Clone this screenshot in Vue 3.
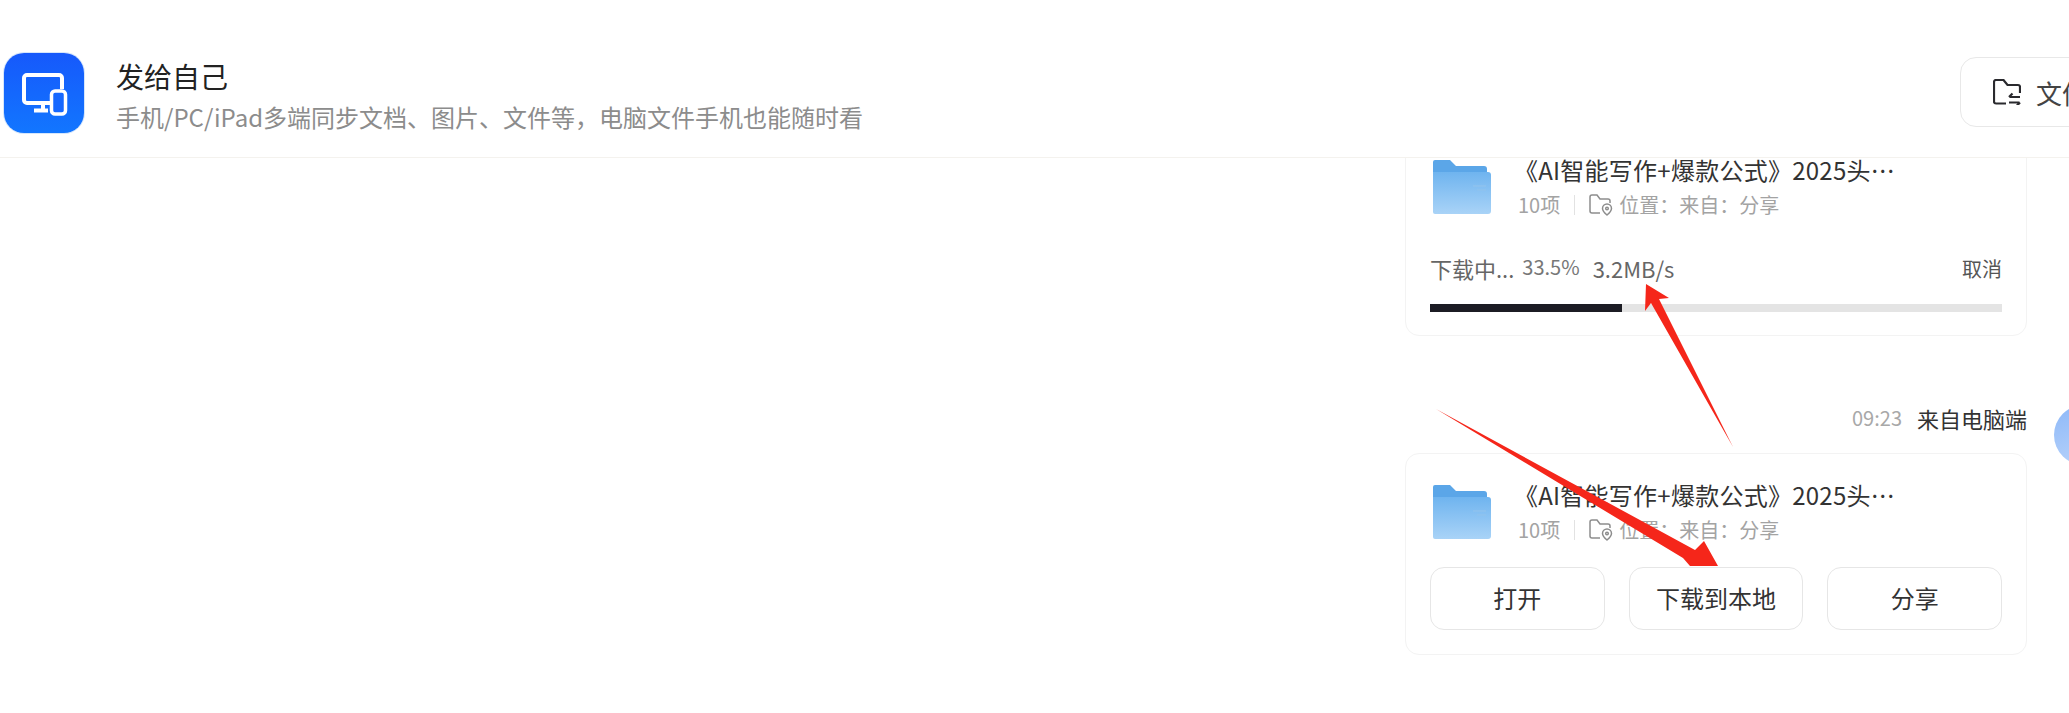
<script setup>
const progress = 33.5
const actions = ['打开', '下载到本地', '分享']
const title = '《AI智能写作+爆款公式》2025头…'
</script>

<template>
  <div class="page">
    <header class="top">
      <div class="logo">
        <svg width="80" height="80" viewBox="0 0 80 80" fill="none">
          <path d="M46 50H23a3 3 0 0 1-3-3V25a3 3 0 0 1 3-3h32a3 3 0 0 1 3 3v11" stroke="#fff" stroke-width="4" />
          <path d="M39 50v6M30 57.500h14" stroke="#fff" stroke-width="4" />
          <rect x="47.500" y="38" width="14" height="23" rx="3.500" fill="#1668ff" stroke="#fff" stroke-width="3.500" />
        </svg>
      </div>
      <div class="heading">
        <div class="heading-title">发给自己</div>
        <div class="heading-sub">手机/PC/iPad多端同步文档、图片、文件等，电脑文件手机也能随时看</div>
      </div>
      <div class="files">
        <svg width="28" height="26" viewBox="0 0 28 26" fill="none" stroke="#2a2a2e" stroke-width="2.200">
          <path d="M13 24.500H3a2 2 0 0 1-2-2V3a2 2 0 0 1 2-2h7.500l4 5H25a2 2 0 0 1 2 2v6" />
          <path d="M27 18H16.500M19.500 14.500 16 18M16 23.500h10.500M23.500 27l3.500-3.500" />
        </svg>
        <span>文件</span>
      </div>
    </header>

    <main class="thread">
      <section class="card first">
        <div class="file">
          <svg class="folder" width="58" height="54" viewBox="0 0 58 54">
            <defs>
              <linearGradient id="fb" x1="0" y1="0" x2="0" y2="1">
                <stop offset="0" stop-color="#6fb4ef" />
                <stop offset="1" stop-color="#a9d3f7" />
              </linearGradient>
            </defs>
            <path d="M0 2a2 2 0 0 1 2-2h15l6 6h28a3 3 0 0 1 3 3v6H0z" fill="#5ba6e8" />
            <path d="M0 12h55a3 3 0 0 1 3 3v36a3 3 0 0 1-3 3H2a2 2 0 0 1-2-2z" fill="url(#fb)" />
            <path d="M40 26h13M44 30h9" stroke="#8fc2ee" stroke-width="1.500" />
          </svg>
          <div class="file-text">
            <div class="file-title">{{ title }}</div>
            <div class="file-meta">
              <span>10项</span>
              <i class="divider"></i>
              <svg class="pin" width="24" height="22" viewBox="0 0 24 22" fill="none" stroke="#8d8d8d" stroke-width="1.500">
                <path d="M11 19H3a2 2 0 0 1-2-2V3a2 2 0 0 1 2-2h5l3 4h8a2 2 0 0 1 2 2v2" />
                <path d="M18 21c-3-2.500-4.500-4.500-4.500-6.500a4.500 4.500 0 0 1 9 0c0 2-1.500 4-4.500 6.500z" />
                <circle cx="18" cy="14.500" r="1.300" />
              </svg>
              <span class="where">位置：来自：分享</span>
            </div>
          </div>
        </div>
        <div class="status">
          <span class="status-label">下载中...</span>
          <span class="status-pct">{{ progress }}%</span>
          <span class="status-speed">3.2MB/s</span>
          <span class="status-cancel">取消</span>
        </div>
        <div class="bar"><div class="bar-fill" :style="{ width: progress + '%' }"></div></div>
      </section>

      <div class="message">
        <div class="meta">
          <span class="time">09:23</span>
          <span class="source">来自电脑端</span>
        </div>
        <div class="avatar"></div>
        <section class="card">
          <div class="file">
            <svg class="folder" width="58" height="54" viewBox="0 0 58 54">
              <path d="M0 2a2 2 0 0 1 2-2h15l6 6h28a3 3 0 0 1 3 3v6H0z" fill="#5ba6e8" />
              <path d="M0 12h55a3 3 0 0 1 3 3v36a3 3 0 0 1-3 3H2a2 2 0 0 1-2-2z" fill="url(#fb)" />
              <path d="M40 26h13M44 30h9" stroke="#8fc2ee" stroke-width="1.500" />
            </svg>
            <div class="file-text">
              <div class="file-title">{{ title }}</div>
              <div class="file-meta">
                <span>10项</span>
                <i class="divider"></i>
                <svg class="pin" width="24" height="22" viewBox="0 0 24 22" fill="none" stroke="#8d8d8d" stroke-width="1.500">
                  <path d="M11 19H3a2 2 0 0 1-2-2V3a2 2 0 0 1 2-2h5l3 4h8a2 2 0 0 1 2 2v2" />
                  <path d="M18 21c-3-2.500-4.500-4.500-4.500-6.500a4.500 4.500 0 0 1 9 0c0 2-1.500 4-4.500 6.500z" />
                  <circle cx="18" cy="14.500" r="1.300" />
                </svg>
                <span class="where">位置：来自：分享</span>
              </div>
            </div>
          </div>
          <div class="actions">
            <button v-for="a in actions" :key="a" class="action">{{ a }}</button>
          </div>
        </section>
      </div>
    </main>

    <svg class="marks" width="2069" height="713" viewBox="0 0 2069 713">
      <path d="M1646 284 1669 298 1659 299 1733 447 1651 303 1645 311Z" fill="#f5261a" />
      <path d="M1436 409 1695 550 1704 541 1718 566H1690L1683 558Z" fill="#f5261a" />
    </svg>
  </div>
</template>

<style scoped>
.page {
  position: relative;
  width: 2069px;
  height: 713px;
  overflow: hidden;
  background: #fff;
  font-family: "Noto Sans CJK SC", "Noto Sans", sans-serif;
  color: #222;
}

.top {
  position: relative;
  z-index: 2;
  box-sizing: border-box;
  display: flex;
  align-items: flex-start;
  width: 2069px;
  height: 158px;
  padding: 53px 0 0 4px;
  background: #fff;
  border-bottom: 1px solid #f4f2ee;
}

.logo {
  flex: none;
  width: 80px;
  height: 80px;
  border-radius: 20px;
  background: linear-gradient(180deg, #1659fb, #1276ff);
  box-shadow: 0 0 0 1px #d5e6fb;
}
.logo svg { display: block; }

.heading {
  flex: none;
  margin-left: 32px;
  margin-top: 4px;
}
.heading-title {
  font-size: 28px;
  line-height: 38px;
  color: #222;
}
.heading-sub {
  margin-top: 3px;
  font-size: 24px;
  line-height: 38px;
  color: #8c8c8c;
}

.files {
  flex: none;
  box-sizing: border-box;
  display: flex;
  align-items: center;
  gap: 15px;
  height: 70px;
  margin-left: auto;
  margin-right: -52px;
  margin-top: 4px;
  padding: 0 32px;
  border: 1.500px solid #e8e8e8;
  border-radius: 16px;
  font-size: 26px;
  color: #444;
  white-space: nowrap;
}

.thread {
  display: flex;
  flex-direction: column;
  align-items: flex-start;
  width: 622px;
  margin-top: -30px;
  margin-left: 1405px;
}

.card {
  box-sizing: border-box;
  width: 622px;
  padding: 25px 24px 24px;
  border: 1px solid #f3f3f3;
  border-radius: 14px;
  background: #fff;
}
.first { height: 208px; }

.file {
  display: flex;
  align-items: center;
  padding-left: 3px;
}
.folder { flex: none; }
.file-text { margin-left: 23px; }
.file-title {
  font-size: 24px;
  line-height: 32px;
  letter-spacing: 0.25px;
  color: #333;
  white-space: nowrap;
}
.file-meta {
  display: flex;
  align-items: center;
  margin-top: 5px;
  margin-left: 4px;
  font-size: 20px;
  line-height: 28px;
  color: #a3a3a3;
  white-space: nowrap;
}
.divider {
  width: 1px;
  height: 20px;
  margin: 0 14px 0 14px;
  background: #e2e2e2;
}
.pin { flex: none; }
.where { margin-left: 6px; }

.status {
  display: flex;
  align-items: center;
  height: 30px;
  margin-top: 34px;
  white-space: nowrap;
}
.status-label {
  font-size: 22px;
  color: #666;
}
.status-pct {
  margin-left: 8px;
  margin-top: -4px;
  font-size: 20px;
  color: #777;
}
.status-speed {
  margin-left: 13px;
  font-size: 22px;
  color: #666;
}
.status-cancel {
  margin-left: auto;
  font-size: 20px;
  color: #555;
}

.bar {
  height: 8px;
  margin-top: 21px;
  background: #e4e4e4;
}
.bar-fill {
  height: 100%;
  background: #1c1c24;
}

.message {
  display: grid;
  grid-template-columns: 622px 60px;
  column-gap: 27px;
  margin-top: 69px;
}
.meta {
  display: flex;
  justify-content: flex-end;
  height: 48px;
  line-height: 26px;
  white-space: nowrap;
}
.time {
  font-size: 20px;
  color: #a8a8a8;
}
.source {
  margin-left: 15px;
  font-size: 22px;
  color: #333;
}
.avatar {
  grid-row: 1 / 3;
  grid-column: 2;
  width: 60px;
  height: 60px;
  border-radius: 50%;
  background: linear-gradient(160deg, #8db8f8, #bcd6fb);
}
.message .card { grid-column: 1; }

.actions {
  display: grid;
  grid-template-columns: repeat(3, 1fr);
  gap: 24px;
  margin-top: 23px;
}
.action {
  height: 63px;
  padding: 0 0 2px;
  border: 1.500px solid #e6e6e6;
  border-radius: 14px;
  background: #fff;
  font-family: inherit;
  font-size: 24px;
  color: #333;
}

.marks {
  position: absolute;
  left: 0;
  top: 0;
  z-index: 3;
  pointer-events: none;
}
</style>
